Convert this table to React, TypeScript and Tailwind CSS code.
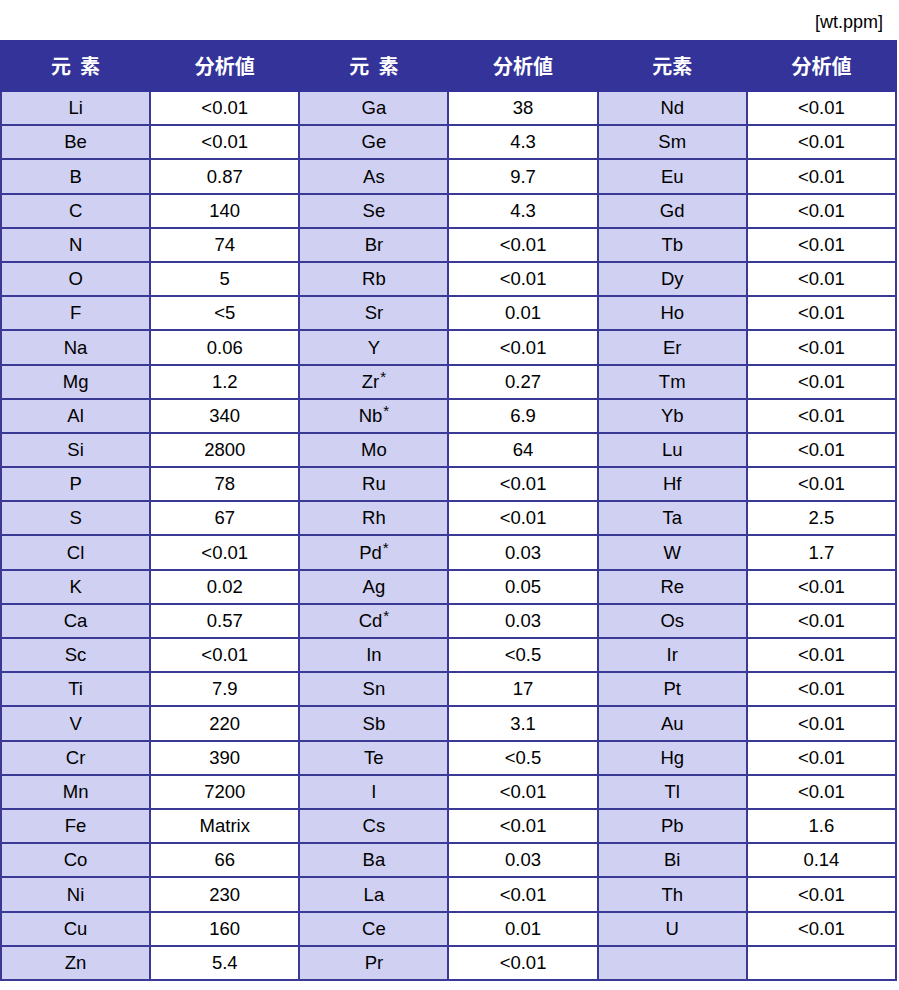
const col1: [string, string][] = [
  ["Li", "<0.01"], ["Be", "<0.01"], ["B", "0.87"], ["C", "140"], ["N", "74"],
  ["O", "5"], ["F", "<5"], ["Na", "0.06"], ["Mg", "1.2"], ["Al", "340"],
  ["Si", "2800"], ["P", "78"], ["S", "67"], ["Cl", "<0.01"], ["K", "0.02"],
  ["Ca", "0.57"], ["Sc", "<0.01"], ["Ti", "7.9"], ["V", "220"], ["Cr", "390"],
  ["Mn", "7200"], ["Fe", "Matrix"], ["Co", "66"], ["Ni", "230"], ["Cu", "160"],
  ["Zn", "5.4"],
];

const col2: [string, string][] = [
  ["Ga", "38"], ["Ge", "4.3"], ["As", "9.7"], ["Se", "4.3"], ["Br", "<0.01"],
  ["Rb", "<0.01"], ["Sr", "0.01"], ["Y", "<0.01"], ["Zr*", "0.27"], ["Nb*", "6.9"],
  ["Mo", "64"], ["Ru", "<0.01"], ["Rh", "<0.01"], ["Pd*", "0.03"], ["Ag", "0.05"],
  ["Cd*", "0.03"], ["In", "<0.5"], ["Sn", "17"], ["Sb", "3.1"], ["Te", "<0.5"],
  ["I", "<0.01"], ["Cs", "<0.01"], ["Ba", "0.03"], ["La", "<0.01"], ["Ce", "0.01"],
  ["Pr", "<0.01"],
];

const col3: [string, string][] = [
  ["Nd", "<0.01"], ["Sm", "<0.01"], ["Eu", "<0.01"], ["Gd", "<0.01"], ["Tb", "<0.01"],
  ["Dy", "<0.01"], ["Ho", "<0.01"], ["Er", "<0.01"], ["Tm", "<0.01"], ["Yb", "<0.01"],
  ["Lu", "<0.01"], ["Hf", "<0.01"], ["Ta", "2.5"], ["W", "1.7"], ["Re", "<0.01"],
  ["Os", "<0.01"], ["Ir", "<0.01"], ["Pt", "<0.01"], ["Au", "<0.01"], ["Hg", "<0.01"],
  ["Tl", "<0.01"], ["Pb", "1.6"], ["Bi", "0.14"], ["Th", "<0.01"], ["U", "<0.01"],
  ["", ""],
];

function Element({ name }: { name: string }) {
  if (name.endsWith("*")) {
    return (
      <>
        {name.slice(0, -1)}
        <span className="relative -top-[6px] ml-[1px] align-baseline text-[15px]">*</span>
      </>
    );
  }
  return <>{name}</>;
}

function Cells({ row }: { row: [string, string] }) {
  return (
    <>
      <td className="border-2 border-[#3a3a96] bg-[#d0d0f2] text-center">
        <Element name={row[0]} />
      </td>
      <td className="border-2 border-[#3a3a96] bg-white text-center">{row[1]}</td>
    </>
  );
}

export default function App() {
  return (
    <div className="w-[899px] bg-white pt-[11px] font-['Liberation_Sans','Noto_Sans_CJK_JP',sans-serif] text-[18.5px] text-black">
      <div className="h-[29px] pr-[16px] text-right text-[18px] leading-[22px]">[wt.ppm]</div>
      <table className="w-[897px] table-fixed border-collapse">
        <thead>
          <tr className="h-[50px] bg-[#333399] font-['Noto_Sans_CJK_JP',sans-serif] text-[20px] font-bold text-white">
            <th className="border-2 border-[#333399]">元&nbsp;&nbsp;素</th>
            <th className="border-2 border-[#333399]">分析値</th>
            <th className="border-2 border-[#333399]">元&nbsp;&nbsp;素</th>
            <th className="border-2 border-[#333399]">分析値</th>
            <th className="border-2 border-[#333399]">元素</th>
            <th className="border-2 border-[#333399]">分析値</th>
          </tr>
        </thead>
        <tbody>
          {col1.map((r, i) => (
            <tr key={i} className="h-[34.2px]">
              <Cells row={r} />
              <Cells row={col2[i]} />
              <Cells row={col3[i]} />
            </tr>
          ))}
        </tbody>
      </table>
    </div>
  );
}
